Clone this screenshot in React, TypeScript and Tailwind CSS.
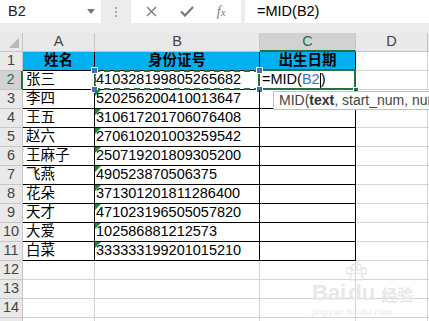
import React from "react";

const names = ["张三", "李四", "王五", "赵六", "王麻子", "飞燕", "花朵", "天才", "大爱", "白菜"];
const ids = [
  "410328199805265682",
  "520256200410013647",
  "310617201706076408",
  "270610201003259542",
  "250719201809305200",
  "490523870506375",
  "371301201811286400",
  "471023196505057820",
  "102586881212573",
  "333333199201015210",
];

const grid = "border-r border-b border-[#d4d4d4]";
const blk = "border-r border-b border-black";
const rowHead =
  "h-[19px] bg-[#e9e9e9] border-r border-b border-[#c6c6c6] flex items-center justify-center text-[#444] text-[14.5px]";

function Handle({ cls }: { cls: string }) {
  return <div className={"absolute w-[7px] h-[7px] bg-[#3b73c6] border border-white " + cls} />;
}

export default function App() {
  const rows: React.ReactNode[] = [];
  rows.push(
    <React.Fragment key="r1">
      <div className={rowHead}>1</div>
      <div className={"h-[19px] bg-[#00b0f0] font-bold flex items-center justify-center text-[14.5px] " + blk}>姓名</div>
      <div className={"h-[19px] bg-[#00b0f0] font-bold flex items-center justify-center text-[14.5px] " + blk}>身份证号</div>
      <div className={"h-[19px] bg-[#00b0f0] font-bold flex items-center justify-center text-[14.5px] " + blk}>出生日期</div>
      <div className={"h-[19px] " + grid} />
      <div className="h-[19px] border-b border-[#d4d4d4]" />
    </React.Fragment>
  );
  names.forEach((n, i) => {
    const r = i + 2;
    const active = r === 2;
    rows.push(
      <React.Fragment key={"r" + r}>
        <div
          className={
            active
              ? "h-[19px] bg-[#d2d2d2] border-r-2 border-b border-r-[#217346] border-b-[#c6c6c6] flex items-center justify-center text-[#217346] text-[14.5px]"
              : rowHead
          }
        >
          {r}
        </div>
        <div className={"h-[19px] flex items-center pl-[3px] text-[14.5px] text-black " + blk}>{n}</div>
        <div className={"relative h-[19px] flex items-center pl-[1px] text-[14.5px] text-black " + blk}>
          {!active && (
            <svg className="absolute left-0 top-0" width="6" height="6" viewBox="0 0 6 6">
              <polygon points="0,0 6,0 0,6" fill="#1e8b3c" />
            </svg>
          )}
          {active && (
            <>
              <div className="absolute inset-[-1px] border-2 border-dashed border-[#217346] pointer-events-none" />
              <Handle cls="left-[-4px] top-[-4px]" />
              <Handle cls="left-[-4px] bottom-[-4px]" />
            </>
          )}
          <span className="relative">{ids[i]}</span>
        </div>
        <div className={"relative h-[19px] flex items-center pl-[2px] text-[14.5px] text-black " + blk}>
          {active && (
            <>
              <div className="absolute left-[-2px] top-[-2px] right-[-1px] bottom-[-1px] border-2 border-[#217346] pointer-events-none" />
              <Handle cls="left-[-4px] top-[-4px]" />
              <Handle cls="left-[-4px] bottom-[-4px]" />
              <div className="absolute right-[-4px] bottom-[-4px] w-[6px] h-[6px] bg-[#217346] border border-white" />
              <span className="relative">
                =MID(<span className="text-[#3b73c6]">B2</span>
                <span className="inline-block w-px h-[15px] bg-black align-middle" />)
              </span>
            </>
          )}
        </div>
        <div className={"h-[19px] " + grid} />
        <div className="h-[19px] border-b border-[#d4d4d4]" />
      </React.Fragment>
    );
  });
  for (let r = 12; r <= 15; r++) {
    rows.push(
      <React.Fragment key={"r" + r}>
        <div className={rowHead}>{r < 15 ? r : ""}</div>
        <div className={"h-[19px] " + grid} />
        <div className={"h-[19px] " + grid} />
        <div className={"h-[19px] " + grid} />
        <div className={"h-[19px] " + grid} />
        <div className="h-[19px] border-b border-[#d4d4d4]" />
      </React.Fragment>
    );
  }

  return (
    <div className="relative w-[429px] h-[321px] overflow-hidden bg-white font-['Liberation_Sans','Noto_Sans_CJK_SC',sans-serif]">
      {/* formula bar */}
      <div className="h-[33px] bg-[#ececec] flex items-start">
        <div className="w-[101px] h-[23px] bg-white flex items-center justify-between pl-[8px] pr-[6px] text-[14.5px] text-[#222]">
          <span>B2</span>
          <svg width="8" height="5" viewBox="0 0 8 5">
            <polygon points="0,0 8,0 4,5" fill="#777" />
          </svg>
        </div>
        <div className="w-[30px] h-[23px] flex flex-col items-center justify-center gap-[2px]">
          <div className="w-[2px] h-[2px] bg-[#aaa]" />
          <div className="w-[2px] h-[2px] bg-[#aaa]" />
          <div className="w-[2px] h-[2px] bg-[#aaa]" />
        </div>
        <div className="w-[110px] h-[23px] bg-white flex items-center justify-around px-[4px]">
          <svg width="11" height="11" viewBox="0 0 11 11">
            <path d="M1 1 L10 10 M10 1 L1 10" stroke="#7a7a7a" strokeWidth="1.4" />
          </svg>
          <svg width="14" height="11" viewBox="0 0 14 11">
            <path d="M1 5.5 L5 9.5 L13 1" stroke="#7a7a7a" strokeWidth="2.2" fill="none" />
          </svg>
          <span className="font-['Liberation_Serif',serif] italic text-[14px] text-[#7a7a7a] leading-none">
            f<span className="text-[11px]">x</span>
          </span>
        </div>
        <div className="w-[4px]" />
        <div className="flex-1 h-[23px] bg-white flex items-center pl-[12px] text-[14.5px] text-black">=MID(B2)</div>
      </div>

      {/* sheet */}
      <div className="grid grid-cols-[23px_72px_165px_96px_72px_1fr]">
        <div className="relative h-[19px] bg-[#e9e9e9] border-r border-b border-[#c6c6c6]">
          <svg className="absolute right-[3px] bottom-[3px]" width="10" height="10" viewBox="0 0 10 10">
            <polygon points="10,0 10,10 0,10" fill="#b8b8b8" />
          </svg>
        </div>
        <div className="h-[19px] bg-[#e9e9e9] border-r border-b border-[#c6c6c6] flex items-center justify-center text-[14.5px] text-[#444]">A</div>
        <div className="h-[19px] bg-[#e9e9e9] border-r border-b border-[#c6c6c6] flex items-center justify-center text-[14.5px] text-[#444]">B</div>
        <div className="h-[19px] bg-[#d2d2d2] border-r border-b-2 border-r-[#c6c6c6] border-b-[#217346] flex items-center justify-center text-[14.5px] text-[#217346]">C</div>
        <div className="h-[19px] bg-[#e9e9e9] border-r border-b border-[#c6c6c6] flex items-center justify-center text-[14.5px] text-[#444]">D</div>
        <div className="h-[19px] bg-[#e9e9e9] border-b border-[#c6c6c6]" />
        {rows}
      </div>

      {/* function tooltip */}
      <div className="absolute left-[273px] top-[91px] h-[19px] bg-white border border-[#c2c2c2] pl-[5px] pr-2 flex items-center whitespace-nowrap text-[14px] text-[#444]">
        MID(<b className="text-[#333]">text</b>, start_num, num_chars)
      </div>

      {/* watermark */}
      <div className="absolute left-[312px] top-[264px] flex flex-col items-start text-[#e8e8e8] pointer-events-none">
        <svg className="ml-[32px]" width="24" height="18" viewBox="0 0 24 18">
          <g fill="none" stroke="#e2e2e2" strokeWidth="1.2">
            <ellipse cx="5" cy="7" rx="2.5" ry="3.2" />
            <ellipse cx="10" cy="3.5" rx="2.5" ry="3" />
            <ellipse cx="15" cy="3.5" rx="2.5" ry="3" />
            <ellipse cx="20" cy="7" rx="2.5" ry="3.2" />
            <path d="M6 16 C6 11 9 9 12.5 9 C16 9 19 11 19 16 Z" />
          </g>
        </svg>
        <div className="flex items-end gap-[2px]">
          <span className="text-[22px] font-bold leading-none">Bai</span>
          <span className="text-[22px] font-bold leading-none">du</span>
          <span className="text-[16px] font-bold leading-none ml-1">经验</span>
        </div>
        <span className="text-[9px] leading-none mt-[4px] tracking-[0.5px]">jingyan.baidu.com</span>
      </div>
    </div>
  );
}
